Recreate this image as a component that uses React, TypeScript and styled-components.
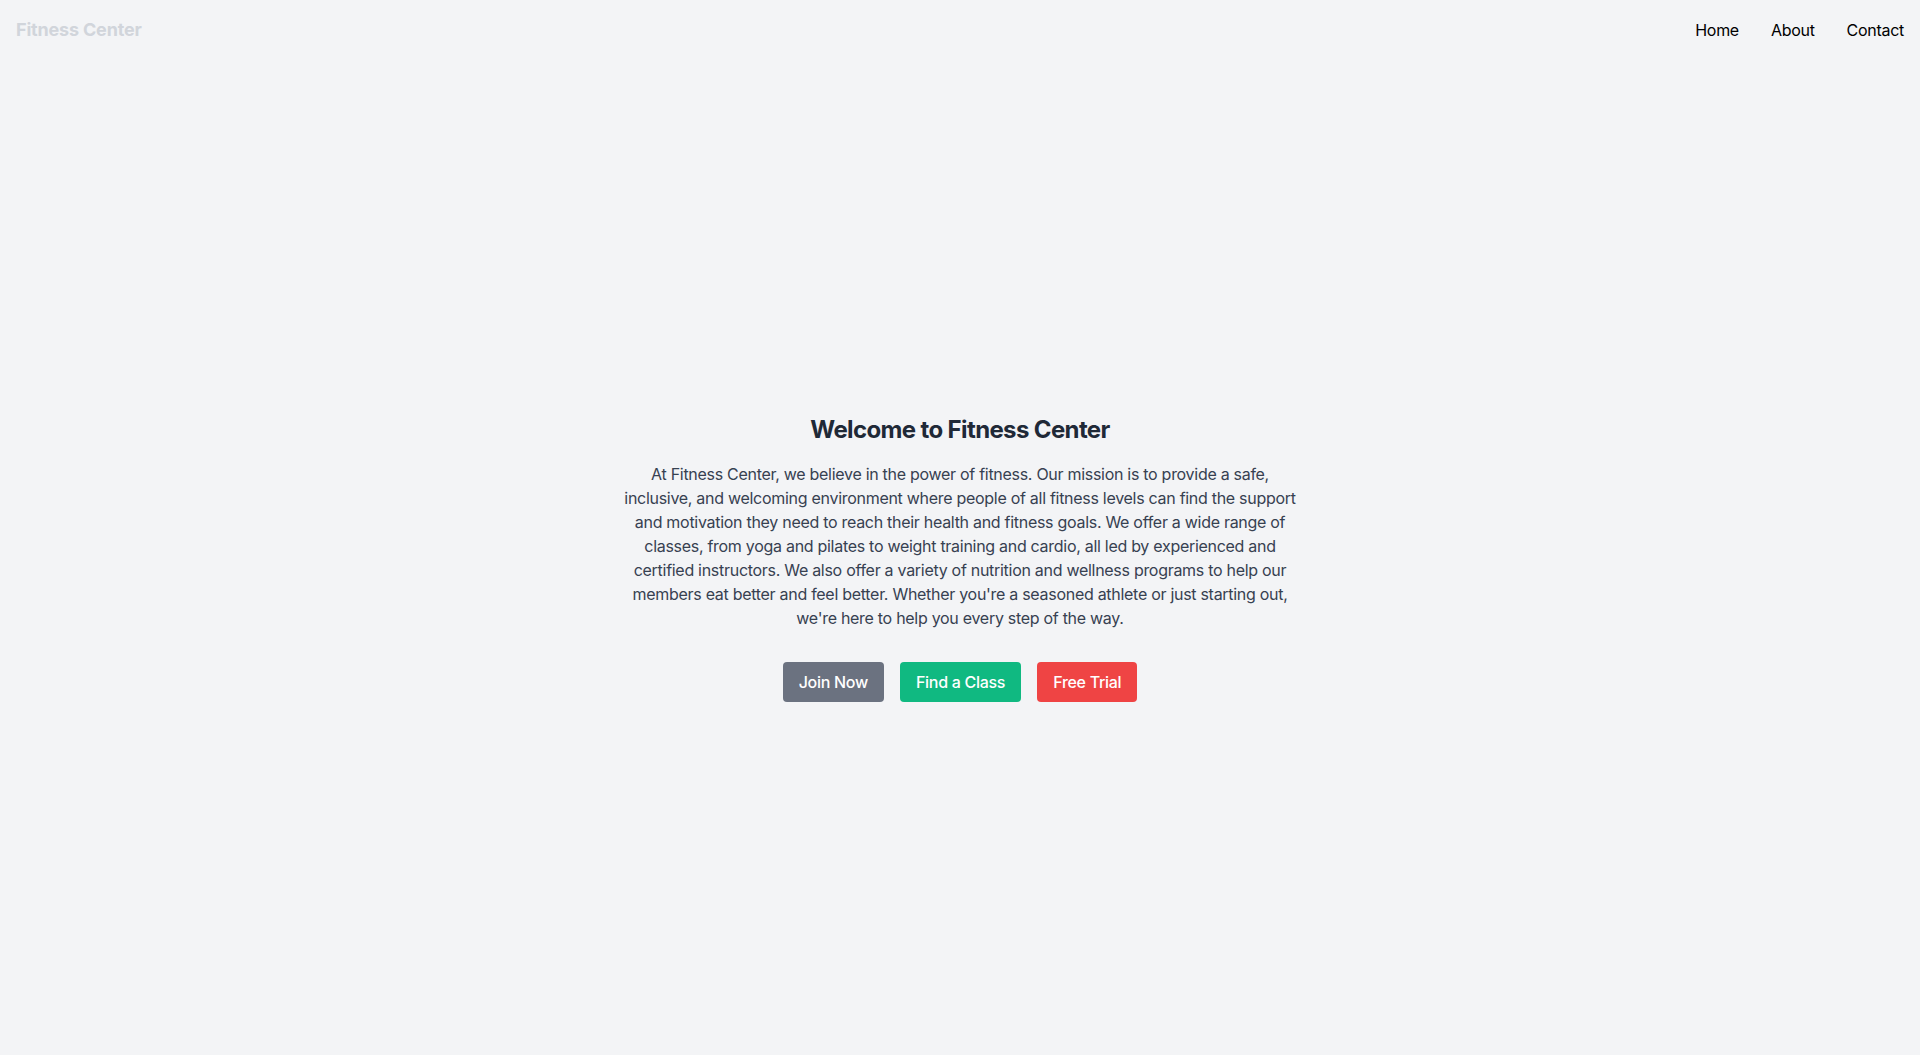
import React from "react";
import styled, { createGlobalStyle } from "styled-components";

const GlobalStyle = createGlobalStyle`
  * { box-sizing: border-box; }
  html, body { margin: 0; padding: 0; }
  body {
    background: #f3f4f6;
    font-family: Inter, "Noto Sans", "Liberation Sans", sans-serif;
    letter-spacing: -0.018em;
    -webkit-font-smoothing: antialiased;
  }
`;

const Page = styled.div`
  min-height: 100vh;
  display: flex;
  flex-direction: column;
  background: #f3f4f6;
`;

const Header = styled.header`
  height: 60px;
  padding: 0 16px;
  display: flex;
  align-items: center;
  justify-content: space-between;
`;

const Logo = styled.div`
  font-size: 18px;
  line-height: 28px;
  font-weight: 700;
  letter-spacing: -0.01em;
  color: #d1d5db;
`;

const Nav = styled.nav`
  display: flex;
  gap: 32px;
`;

const NavLink = styled.a`
  font-size: 16px;
  line-height: 24px;
  color: #000;
  text-decoration: none;
`;

const Main = styled.main`
  flex: 1;
  display: flex;
  flex-direction: column;
  align-items: center;
  justify-content: center;
  text-align: center;
`;

const Title = styled.h1`
  margin: 0 0 16px;
  font-size: 24px;
  line-height: 32px;
  font-weight: 700;
  letter-spacing: -0.026em;
  color: #1f2937;
`;

const Text = styled.p`
  margin: 0;
  max-width: 672px;
  font-size: 16px;
  line-height: 24px;
  color: #374151;
`;

const Actions = styled.div`
  margin-top: 32px;
  display: flex;
  gap: 16px;
`;

const Button = styled.button<{ $bg: string }>`
  border: none;
  border-radius: 4px;
  padding: 8px 16px;
  font-family: inherit;
  font-size: 16px;
  line-height: 24px;
  font-weight: 500;
  letter-spacing: -0.018em;
  color: #fff;
  background: ${(p) => p.$bg};
  cursor: pointer;
`;

export default function App() {
  return (
    <>
      <GlobalStyle />
      <Page>
        <Header>
          <Logo>Fitness Center</Logo>
          <Nav>
            <NavLink href="#">Home</NavLink>
            <NavLink href="#">About</NavLink>
            <NavLink href="#">Contact</NavLink>
          </Nav>
        </Header>
        <Main>
          <Title>Welcome to Fitness Center</Title>
          <Text>
            At Fitness Center, we believe in the power of fitness. Our mission is to provide a safe,
            inclusive, and welcoming environment where people of all fitness levels can find the
            support and motivation they need to reach their health and fitness goals. We offer a wide
            range of classes, from yoga and pilates to weight training and cardio, all led by
            experienced and certified instructors. We also offer a variety of nutrition and wellness
            programs to help our members eat better and feel better. Whether you're a seasoned athlete
            or just starting out, we're here to help you every step of the way.
          </Text>
          <Actions>
            <Button $bg="#6b7280">Join Now</Button>
            <Button $bg="#10b981">Find a Class</Button>
            <Button $bg="#ef4444">Free Trial</Button>
          </Actions>
        </Main>
      </Page>
    </>
  );
}
